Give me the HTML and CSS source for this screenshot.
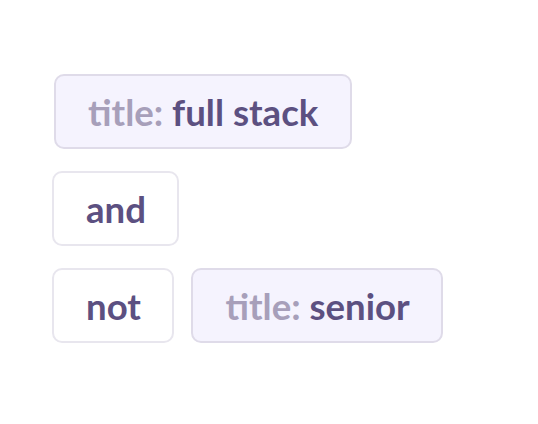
FILE: index.html
```html
<!DOCTYPE html>
<html>
<head>
<meta charset="utf-8">
<link rel="stylesheet" href="styles.css">
</head>
<body>
<div class="query">
  <div class="row row-first">
    <span class="chip chip-field"><span class="key">title:</span> <span class="val">full stack</span></span>
  </div>
  <div class="row">
    <span class="chip chip-op"><span class="val">and</span></span>
  </div>
  <div class="row">
    <span class="chip chip-op"><span class="val">not</span></span>
    <span class="chip chip-field"><span class="key">title:</span> <span class="val">senior</span></span>
  </div>
</div>
</body>
</html>
```
FILE: styles.css
```css
html, body {
  margin: 0;
  padding: 0;
  background: #ffffff;
}
.query {
  display: flex;
  flex-direction: column;
  align-items: flex-start;
  gap: 22px;
  padding: 74px 0 0 52px;
  font-family: Lato, "Noto Sans", sans-serif;
  font-weight: 700;
  font-size: 36.6px;
}
.row {
  display: flex;
  gap: 17px;
}
.row-first {
  margin-left: 2px;
}
.chip {
  display: block;
  height: 70px;
  line-height: 71px;
  padding: 1px 31.5px 0 32px;
  border: 2px solid #e8e6ee;
  border-radius: 10px;
  background: #ffffff;
  white-space: pre;
}
.chip-field {
  background: #f5f3fe;
  border-color: #dfdbe9;
}
.key {
  color: #a79fba;
}
.val {
  color: #5c5081;
}
```
